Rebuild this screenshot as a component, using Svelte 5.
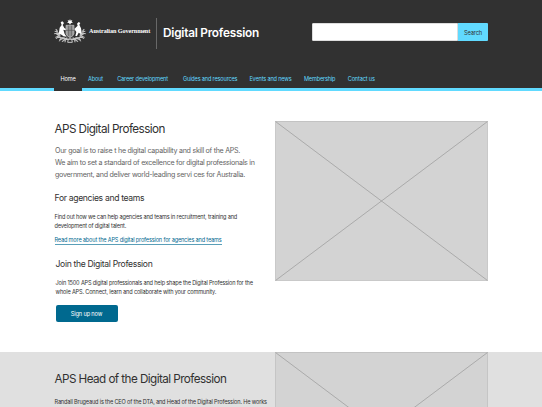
<script>
  const nav = [
    { label: 'Home', w: 15.5, gap: 6, active: true },
    { label: 'About', w: 15.5, gap: 13.7 },
    { label: 'Career development', w: 51, gap: 14.8 },
    { label: 'Guides and resources', w: 55, gap: 11.4 },
    { label: 'Events and news', w: 43, gap: 11.6 },
    { label: 'Membership', w: 32, gap: 11.8 },
    { label: 'Contact us', w: 28, gap: 0 }
  ];
</script>

<header>
  <div class="top">
    <div class="brand">
      <svg class="crest" viewBox="0 0 96 72" width="32" height="24" fill="none" stroke="#c4c4c4">
        <path d="M48 0l2 5 5-2-2 5 4 3-6 1-3 5-3-5-6-1 4-3-2-5 5 2z" fill="#fff" stroke="none" />
        <path d="M36 19h24v25q-2 8-12 12q-10-4-12-12z" fill="#999" stroke-width="2" />
        <path d="M44 20v31M52 20v31M36 34h24" stroke="#555" stroke-width="2" />
        <path d="M20 10l5-3 5 5-4 6 5 9 5 3-2 4-6-2 4 13 6 8-9-1-9-6-9 3-4-3 8-6 2-14 6-8z" fill="#fff" stroke="none" />
        <path d="M69 14l5-5 5 3-3 5 5 11 2 13 6 6-8-1-7-5-5 10h-5l3-12-6-9 6-6 4-4z" fill="#fff" stroke="none" />
        <path d="M5 31q8 5 3 13q9-1 10 8M1 44q10-2 13 7t15 4M6 59q8-8 17-2t17-1M91 31q-8 5-3 13q-9-1-10 8M95 44q-10-2-13 7t-15 4M90 59q-8-8-17-2t-17-1M24 68q12-11 24-7q12-4 24 7M30 56q9 9 18 3q9 6 18-3M16 63l14-5M80 63l-14-5" stroke-width="3.4" />
        <path d="M10 38l-8-1M12 52l-8 3M22 56l-6 11M35 57l-2 13M86 38l8-1M84 52l8 3M74 56l6 11M61 57l2 13M43 60l-2 10h14l-2-10" stroke-width="3" />
      </svg>
      <span class="gov">Australian Government</span>
      <span class="rule"></span>
      <span class="name">Digital Profession</span>
    </div>
    <form class="search">
      <input type="text" aria-label="Search" />
      <button type="button">Search</button>
    </form>
  </div>
  <nav>
    {#each nav as item}
      <a href="#top" class:active={item.active} style="width:{item.w}px;margin-right:{item.gap}px">{item.label}</a>
    {/each}
  </nav>
</header>

<main>
  <section class="intro">
    <div class="copy">
      <h1>APS Digital Profession</h1>
      <p class="lead">
        Our goal is to raise t he digital capability and skill of the APS.<br />
        We aim to set a standard of excellence for digital professionals in<br />
        government, and deliver world-leading servi ces for Australia.
      </p>
      <h2>For agencies and teams</h2>
      <p class="body">
        Find out how we can help agencies and teams in recruitment, training and<br />
        development of digital talent.
      </p>
      <a class="more" href="#agencies">Read more about the APS digital profession for agencies and teams</a>
      <div class="join">
        <h2>Join the Digital Profession</h2>
        <p class="body">
          Join 1500 APS digital professionals and help shape the Digital Profession for the<br />
          whole APS. Connect, learn and collaborate with your community.
        </p>
        <button class="signup" type="button">Sign up now</button>
      </div>
    </div>
    <svg class="picture" width="213" height="160" viewBox="0 0 213 160">
      <rect x=".5" width="212" height="159.5" fill="#d3d3d3" />
      <path d="M.5.5h212v159H.5z" class="edge" />
      <path d="M.5.5l212 159M212.5.5L.5 159.5" />
    </svg>
  </section>
  <section class="head">
    <div class="copy">
      <h1>APS Head of the Digital Profession</h1>
      <p class="body">Randall Brugeaud is the CEO of the DTA, and Head of the Digital Profession. He works</p>
    </div>
    <svg class="picture" width="213" height="160" viewBox="0 0 213 160">
      <rect x=".5" width="212" height="159.5" fill="#d3d3d3" />
      <path d="M.5.5h212v159H.5z" class="edge" />
      <path d="M.5.5l212 159M212.5.5L.5 159.5" />
    </svg>
  </section>
</main>

<style>
  :global(body) { margin: 0; background: #fff; overflow: hidden; }
  :global(#app) { height: 407px; overflow: hidden; font-family: Inter, "Liberation Sans", sans-serif; color: #313131; }
  header { box-sizing: border-box; height: 91px; background: #313131; border-bottom: 3px solid #61daff; padding: 0 54px; }
  .top { display: flex; justify-content: space-between; height: 65px; }
  .brand { display: flex; align-items: center; height: 65px; white-space: nowrap; }
  .crest { margin-top: -4px; }
  .gov { width: 61px; margin: -3px 7px 0 3px; font: bold 6.2px/10px "Liberation Serif", serif; letter-spacing: -.09px; color: #fff; }
  .rule { width: 1px; height: 31px; margin: 2px 6px 0 -1px; background: #686868; }
  .name { font-size: 11.8px; font-weight: 600; line-height: 16px; letter-spacing: -.23px; color: #fff; }
  .search { display: flex; height: 18px; margin-top: 23px; }
  input { box-sizing: border-box; width: 146px; height: 18px; padding: 0; border: 1px solid #ddd; border-radius: 1px 0 0 1px; background: #fff; }
  .search button { width: 30px; height: 18px; padding: 0; border: 0; border-radius: 0 1px 1px 0; background: #61daff; color: #313131; font: 5.7px/19px Inter, sans-serif; letter-spacing: -.15px; }
  nav { display: flex; height: 26px; font-size: 5.6px; line-height: 28px; letter-spacing: -.17px; white-space: nowrap; }
  nav a { color: #61daff; text-decoration: none; }
  nav a.active { padding: 0 6px 0 6.5px; height: 26px; background: #313131; color: #fff; }
  .intro { display: flex; justify-content: space-between; height: 261px; padding: 0 54px; }
  .intro .picture { margin-top: 30px; }
  .copy { width: 215px; padding-left: .5px; box-sizing: border-box; white-space: nowrap; }
  .picture { display: block; flex: none; }
  .picture path { fill: none; stroke: #999; stroke-width: .7; }
  .picture .edge { stroke: #bbb; }
  h1, h2, p { margin: 0; font-weight: 400; }
  h1 { font-size: 11.7px; line-height: 16px; letter-spacing: -.56px; }
  .intro h1 { margin-top: 30px; }
  .lead { margin: 8px 0 0 .5px; font-size: 7.1px; line-height: 12px; letter-spacing: -.27px; color: #636363; }
  h2 { margin-top: 11px; font-size: 8.6px; line-height: 12px; letter-spacing: -.33px; }
  .body { margin-top: 9px; font-size: 5.6px; line-height: 9px; letter-spacing: -.17px; }
  .more { display: block; width: max-content; margin-top: 6px; font-size: 5.6px; line-height: 7px; letter-spacing: -.17px; color: #00698f; text-decoration: none; border-bottom: 1px solid #5a9fb8; }
  .join { margin: 13px 0 0 1px; }
  .signup { display: block; width: 62px; height: 17px; margin-top: 8px; padding: 0; border: 0; border-radius: 2px; background: #00698f; color: #fff; font: 5.7px/18px Inter, sans-serif; letter-spacing: -.17px; }
  .head { display: flex; justify-content: space-between; height: 160px; padding: 0 54px; background: #e0e0e0; }
  .head h1 { margin-top: 19px; }
  .head .body { margin-top: 11px; }
</style>
